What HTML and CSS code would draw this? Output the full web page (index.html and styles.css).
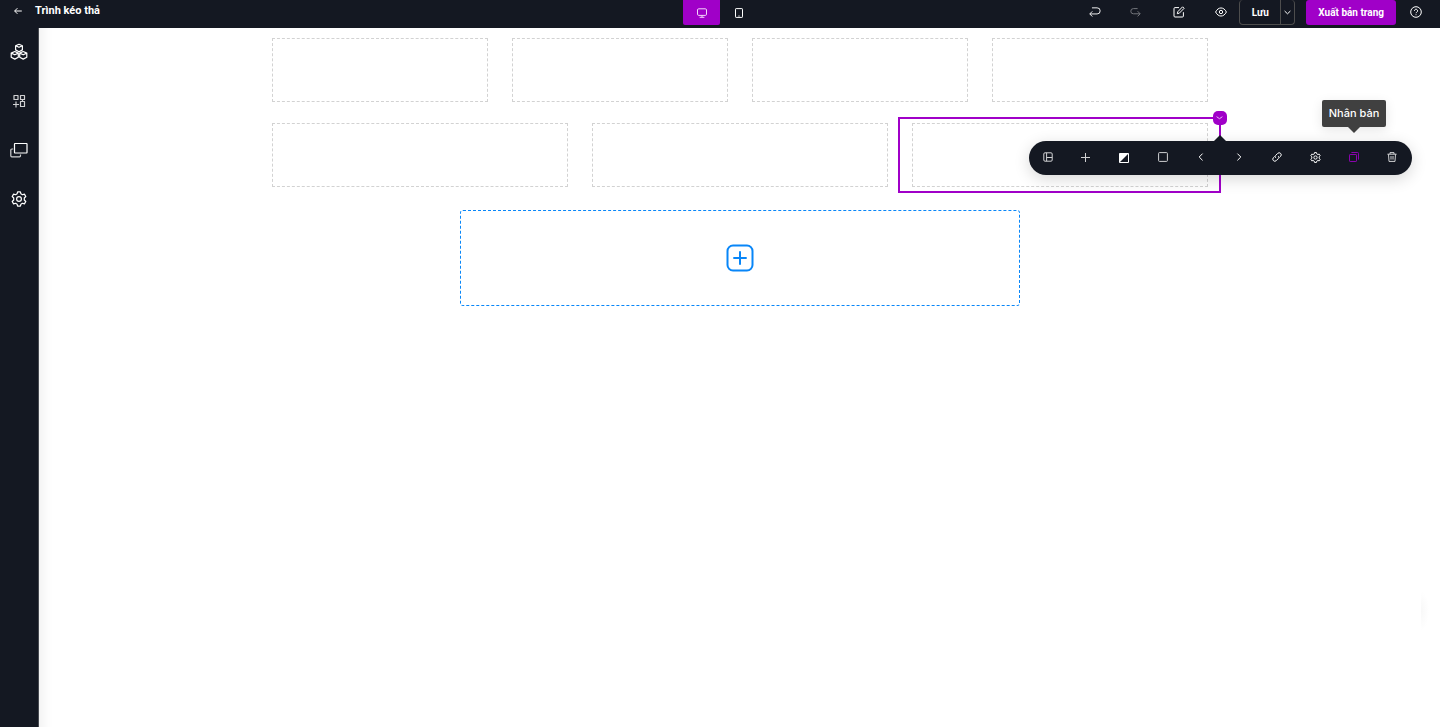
FILE: index.html
```html
<!DOCTYPE html>
<html lang="vi">
<head>
<meta charset="utf-8">
<meta name="viewport" content="width=device-width, initial-scale=1">
<title>Trình kéo thả</title>
<link rel="stylesheet" href="styles.css">
</head>
<body>
<div class="app">
  <header class="topbar">
    <div class="topbar-left">
      <button class="icon-btn back" type="button" aria-label="Quay lại">
        <svg width="8" height="8" viewBox="0 0 8 8"><path d="M7.8 4H.8M3.4 1.2L.6 4l2.8 2.8"/></svg>
      </button>
      <h1 class="title">Trình kéo thả</h1>
    </div>
    <div class="devices">
      <button class="device active" type="button" aria-label="Máy tính">
        <svg width="10" height="10" viewBox="0 0 10 10"><rect x=".5" y=".8" width="9" height="6.6" rx="1.2"/><path d="M5 7.4v1.8M2.6 9.3h4.8"/></svg>
      </button>
      <button class="device" type="button" aria-label="Điện thoại">
        <svg width="8" height="10" viewBox="0 0 8 10"><rect x=".5" y=".6" width="7" height="8.8" rx=".6"/><path d="M3.4 8h1.2"/></svg>
      </button>
    </div>
    <div class="topbar-right">
      <div class="history">
        <button class="icon-btn" type="button" aria-label="Hoàn tác">
          <svg width="13" height="12" viewBox="0 0 13 12"><path d="M3.200 1.500h5.600a3.300 3.300 0 0 1 0 6.600H1M3.600 5.300L.8 8.100l2.800 2.800"/></svg>
        </button>
        <button class="icon-btn muted" type="button" aria-label="Làm lại" disabled>
          <svg width="11" height="11" viewBox="0 0 11 11"><path d="M7.600 1.600H3.400a2.600 2.600 0 0 0 0 5.200H10M7.600 4.200l2.600 2.600-2.600 2.600"/></svg>
        </button>
      </div>
      <button class="icon-btn" type="button" aria-label="Chỉnh sửa">
        <svg width="12" height="12" viewBox="0 0 12 12"><path d="M6 1.600H2a1 1 0 0 0-1 1V10a1 1 0 0 0 1 1h7.400a1 1 0 0 0 1-1V6.200"/><path d="M9.600.8l1.500 1.500-4.800 4.900-2 .5.5-2z"/></svg>
      </button>
      <button class="icon-btn" type="button" aria-label="Xem trước">
        <svg width="12" height="12" viewBox="0 0 12 12"><path d="M.6 6C3.200.6 8.800.6 11.400 6 8.800 11.400 3.200 11.400.6 6z"/><circle cx="6" cy="6" r="1.700"/></svg>
      </button>
      <div class="save-group">
        <button class="save" type="button">Lưu</button>
        <button class="save-more" type="button" aria-label="Tùy chọn lưu">
          <svg width="7" height="5" viewBox="0 0 7 5"><path d="M.6 1l2.900 2.800L6.400 1"/></svg>
        </button>
      </div>
      <button class="publish" type="button">Xuất bản trang</button>
      <button class="icon-btn" type="button" aria-label="Trợ giúp">
        <svg width="12" height="12" viewBox="0 0 12 12"><circle cx="6" cy="6" r="5.300"/><path d="M4.400 4.800a1.600 1.600 0 1 1 2.400 1.400c-.5.3-.8.5-.8 1M6 8.300v.9"/></svg>
      </button>
    </div>
  </header>

  <nav class="sidebar" aria-label="Công cụ">
    <button class="side-btn" type="button" aria-label="Thành phần">
      <svg width="18" height="18" viewBox="0 0 18 18"><path d="M9 1.300l3.400 1.500v4.100L9 8.700 5.600 6.900V2.800zM4.800 8.500l3.500 1.600v4.100l-3.500 1.900-3.600-1.900v-4.100zM13.200 8.500l3.600 1.600v4.100l-3.600 1.900-3.500-1.900v-4.100zM5.600 2.800L9 4.300l3.400-1.500M1.200 10.100l3.600 1.700 3.500-1.700M9.700 10.100l3.500 1.700 3.600-1.700"/></svg>
    </button>
    <button class="side-btn" type="button" aria-label="Thêm khối">
      <svg class="soft" width="14" height="14" viewBox="0 0 14 14"><path d="M2 1.500h4v4H2zM8.500 1.500h4v4h-4zM8.500 7.500h4v5h-4zM4 7.500v6M1 10.500h6M10.500 5.500v2"/></svg>
    </button>
    <button class="side-btn" type="button" aria-label="Trang">
      <svg width="18" height="16" viewBox="0 0 18 16"><rect x="4.500" y="1.500" width="12.500" height="9.500" rx=".4"/><path class="soft" d="M3.200 7H1.800a1 1 0 0 0-1 1v5.800a1 1 0 0 0 1 1h7.700a1 1 0 0 0 1-1v-1.300"/></svg>
    </button>
    <button class="side-btn" type="button" aria-label="Cài đặt">
      <svg width="16" height="16" viewBox="0 0 16 16"><path d="M6.600.8h2.800l.5 2 1.500.9 2-.6 1.400 2.400-1.500 1.500v2l1.500 1.500-1.400 2.400-2-.6-1.500.9-.5 2H6.600l-.5-2-1.500-.9-2 .6-1.400-2.400L2.700 9V7L1.200 5.500l1.400-2.400 2 .6 1.500-.9z"/><circle cx="8" cy="8" r="2.400"/></svg>
    </button>
  </nav>

  <main class="canvas">
    <div class="page">
      <section class="row">
        <div class="col"><div class="slot"></div></div>
        <div class="col"><div class="slot"></div></div>
        <div class="col"><div class="slot"></div></div>
        <div class="col"><div class="slot"></div></div>
      </section>
      <section class="row">
        <div class="col"><div class="slot"></div></div>
        <div class="col"><div class="slot"></div></div>
        <div class="col selected">
          <div class="slot"></div>
          <button class="handle" type="button" aria-label="Đóng thanh công cụ">
            <svg width="7" height="4" viewBox="0 0 7 4"><path d="M.6.7l2.900 2 2.900-2"/></svg>
          </button>
          <div class="toolbar" role="toolbar" aria-label="Công cụ cột">
            <button class="tool" type="button" aria-label="Bố cục">
              <svg class="soft" width="10" height="10" viewBox="0 0 10 10"><rect x=".8" y=".8" width="8.400" height="8.400" rx="1.200"/><path d="M3.600.8v8.400M3.600 5.500h5.600"/></svg>
            </button>
            <button class="tool" type="button" aria-label="Thêm">
              <svg class="soft" width="9" height="9" viewBox="0 0 9 9"><path d="M4.500 0v9M0 4.500h9"/></svg>
            </button>
            <button class="tool" type="button" aria-label="Màu nền">
              <svg width="10" height="12" viewBox="0 0 10 12"><path class="solid" d="M.5 2.500h9l-9 9z"/><path d="M.5 2.500h9v9h-9z"/></svg>
            </button>
            <button class="tool" type="button" aria-label="Viền">
              <svg class="soft" width="10" height="10" viewBox="0 0 10 10"><rect x=".6" y=".6" width="8.800" height="8.800" rx=".8"/></svg>
            </button>
            <button class="tool" type="button" aria-label="Sang trái">
              <svg width="6" height="8" viewBox="0 0 6 8"><path d="M4.600.6L1.200 4l3.400 3.400"/></svg>
            </button>
            <button class="tool" type="button" aria-label="Sang phải">
              <svg width="6" height="8" viewBox="0 0 6 8"><path d="M1.400.6L4.800 4 1.400 7.400"/></svg>
            </button>
            <button class="tool" type="button" aria-label="Liên kết">
              <svg width="10" height="10" viewBox="0 0 10 10"><path d="M3.700 5.800a1.700 1.700 0 0 1 0-2.400L5.700 1.400a2 2 0 0 1 2.900 2.900L7.400 5.500M6.300 4.200a1.700 1.700 0 0 1 0 2.400L4.300 8.600a2 2 0 0 1-2.900-2.900L2.600 4.500"/></svg>
            </button>
            <button class="tool" type="button" aria-label="Cài đặt cột">
              <svg width="11" height="11" viewBox="0 0 16 16"><path class="thick" d="M6.600.8h2.800l.5 2 1.500.9 2-.6 1.400 2.400-1.500 1.500v2l1.500 1.500-1.400 2.400-2-.6-1.500.9-.5 2H6.600l-.5-2-1.500-.9-2 .6-1.400-2.400L2.700 9V7L1.200 5.500l1.400-2.400 2 .6 1.500-.9z"/><circle class="thick" cx="8" cy="8" r="2.400"/></svg>
            </button>
            <button class="tool current" type="button" aria-labelledby="tip-duplicate">
              <svg width="10" height="10" viewBox="0 0 10 10"><rect x=".5" y="2.500" width="7" height="7" rx=".6"/><path d="M2.400.5h6.300a.8.8 0 0 1 .8.8v6.300"/></svg>
              <span class="tooltip" id="tip-duplicate">Nhân bản</span>
            </button>
            <button class="tool" type="button" aria-label="Xóa">
              <svg class="soft" width="10" height="10" viewBox="0 0 10 10"><path d="M.4 2.200h9.200M3 2.200V.6h4v1.600M1.500 2.200l.5 7.200h6l.5-7.200M4 4v3.600M6 4v3.600"/></svg>
            </button>
          </div>
        </div>
      </section>
      <button class="add-section" type="button" aria-label="Thêm phần mới">
        <svg width="28" height="28" viewBox="0 0 28 28"><rect x="1.500" y="1.500" width="25" height="25" rx="5.500"/><path d="M14 7.300v13.400M7.300 14h13.400"/></svg>
      </button>
    </div>
    <div class="edge-tab"></div>
  </main>
</div>
</body>
</html>
```
FILE: styles.css
```css
:root {
  --navy: #141822;
  --purple: #a000c8;
  --blue: #0886f8;
}

* {
  box-sizing: border-box;
}

body {
  margin: 0;
  font-family: Roboto, "Liberation Sans", sans-serif;
  font-size: 11px;
  background: #fff;
}

button {
  display: flex;
  align-items: center;
  justify-content: center;
  padding: 0;
  border: 0;
  background: none;
  color: inherit;
  font: inherit;
  cursor: pointer;
}

svg {
  display: block;
  fill: none;
  stroke: currentColor;
  stroke-linejoin: round;
}

.soft {
  opacity: 0.8;
}

.solid {
  fill: currentColor;
  stroke: none;
}

.thick {
  stroke-width: 1.4;
}

.app {
  display: grid;
  grid-template: auto 1fr / 39px 1fr;
  min-height: 100vh;
  overflow: hidden;
}

.topbar {
  grid-column: 1 / -1;
  display: grid;
  grid-template-columns: 1fr auto 1fr;
  align-items: center;
  padding-bottom: 3px;
  background: var(--navy);
  color: #fff;
}

.topbar-left {
  display: flex;
  align-items: center;
  gap: 13px;
  padding: 0 14px 4px;
}

.title {
  margin: 0;
  font-size: 11px;
  line-height: 16px;
  font-weight: 700;
}

.devices {
  display: flex;
}

.device {
  width: 37px;
  height: 25px;
  border-radius: 0 0 2px 2px;
}

.active {
  background: var(--purple);
  color: #f3d6fa;
}

.topbar-right {
  display: flex;
  align-items: center;
  justify-content: flex-end;
  padding-right: 18px;
}

.topbar-right .icon-btn {
  width: 12px;
  margin-right: 30px;
  padding-bottom: 1px;
}

.history {
  display: flex;
  gap: 28px;
  margin-right: 32px;
}

.history .icon-btn {
  margin-right: 0;
}

.muted {
  opacity: 0.4;
}

.save-group {
  display: flex;
  margin: 0 11px 0 -18px;
  border: 1px solid #4d4d4d;
  border-top: 0;
  border-radius: 4px;
  font-size: 10px;
  font-weight: 700;
}

.save {
  width: 40px;
  height: 24px;
}

.save-more {
  width: 14px;
  border-left: 1px solid #4d4d4d;
}

.publish {
  height: 25px;
  margin-right: 14px;
  padding: 0 12px 1px;
  border-radius: 3px;
  background: var(--purple);
  font-size: 10px;
  font-weight: 700;
}

.topbar-right .publish + .icon-btn {
  margin-right: 0;
}

.sidebar {
  display: flex;
  flex-direction: column;
  gap: 25px;
  padding-top: 12px;
  border-right: 1px solid #484b52;
  background: var(--navy);
  color: #fff;
}

.side-btn {
  height: 24px;
}

.side-btn svg {
  stroke-width: 1.2;
}

.canvas {
  position: relative;
  padding: 10px 0 40px;
  box-shadow: inset 16px 0 12px -12px #f0f0f0;
}

.page {
  display: flex;
  flex-direction: column;
  align-items: center;
  width: 100%;
  max-width: 960px;
  margin: 0 auto;
}

.row {
  display: flex;
  width: 100%;
  margin-bottom: 21px;
}

.col {
  position: relative;
  flex: 1;
  padding: 0 12px;
}

.slot {
  height: 64px;
  border: 1px dashed #d2d2d2;
}

.selected::before {
  content: "";
  position: absolute;
  inset: -6px -1px -6px -2px;
  border: 2px solid var(--purple);
}

.handle {
  position: absolute;
  top: -12px;
  right: -7px;
  width: 14px;
  height: 14px;
  border-radius: 5px;
  background: var(--purple);
  color: #e9b8f5;
}

.toolbar {
  position: absolute;
  top: 18px;
  right: -192px;
  display: flex;
  width: 383px;
  height: 34px;
  border-radius: 17px;
  background: var(--navy);
  color: #fff;
  box-shadow: 0 4px 16px rgba(0, 0, 0, 0.16);
}

.toolbar::before {
  content: "";
  position: absolute;
  bottom: 100%;
  left: 50%;
  border: 6px solid transparent;
  border-top: 0;
  border-bottom-color: var(--navy);
  transform: translateX(-50%);
}

.tool {
  position: relative;
  flex: 1;
  padding-bottom: 2px;
}

.current {
  color: var(--purple);
}

.current svg {
  opacity: 0.85;
}

.tooltip {
  position: absolute;
  bottom: 48px;
  left: 50%;
  width: 64px;
  border-radius: 2px;
  background: #404040;
  color: #fff;
  font-family: Inter, Roboto, sans-serif;
  font-size: 11px;
  font-weight: 500;
  line-height: 27px;
  box-shadow: 0 3px 12px rgba(0, 0, 0, 0.1);
  transform: translateX(-50%);
}

.tooltip::after {
  content: "";
  position: absolute;
  top: 100%;
  left: 50%;
  border: 6px solid transparent;
  border-bottom: 0;
  border-top-color: #404040;
  transform: translateX(-50%);
}

.add-section {
  width: 560px;
  max-width: 100%;
  height: 96px;
  margin-top: 2px;
  border: 1px dashed var(--blue);
  border-radius: 3px;
  color: var(--blue);
}

.add-section svg {
  stroke-width: 2;
}

.edge-tab {
  position: absolute;
  right: 0;
  bottom: 96px;
  width: 19px;
  height: 40px;
  background: radial-gradient(8px 20px at left, #f8f8f8, #fff);
}
```
